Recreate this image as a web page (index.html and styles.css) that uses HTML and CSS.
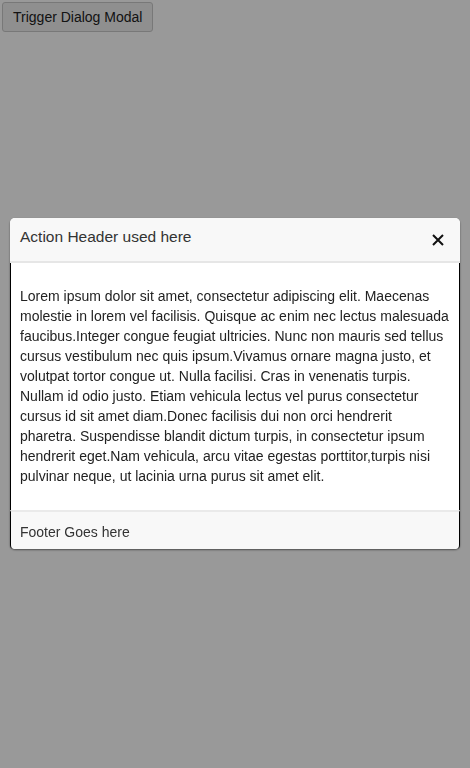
FILE: index.html
```html
<!DOCTYPE html>
<html>
<head>
<meta charset="utf-8">
<link rel="stylesheet" href="styles.css">
</head>
<body>
<button class="trigger">Trigger Dialog Modal</button>
<div class="overlay">
  <div class="dialog">
    <div class="dialog-header">
      <span class="title">Action Header used here</span>
      <span class="close"><svg width="12" height="12" viewBox="0 0 12 12"><path d="M1 1 L11 11 M11 1 L1 11" stroke="#111" stroke-width="2" fill="none"/></svg></span>
    </div>
    <div class="dialog-body">Lorem ipsum dolor sit amet, consectetur adipiscing elit. Maecenas molestie in lorem vel facilisis. Quisque ac enim nec lectus malesuada faucibus.Integer congue feugiat ultricies. Nunc non mauris sed tellus cursus vestibulum nec quis ipsum.Vivamus ornare magna justo, et volutpat tortor congue ut. Nulla facilisi. Cras in venenatis turpis. Nullam id odio justo. Etiam vehicula lectus vel purus consectetur cursus id sit amet diam.Donec facilisis dui non orci hendrerit pharetra. Suspendisse blandit dictum turpis, in consectetur ipsum hendrerit eget.Nam vehicula, arcu vitae egestas porttitor,turpis nisi pulvinar neque, ut lacinia urna purus sit amet elit.</div>
    <div class="dialog-footer">Footer Goes here</div>
  </div>
</div>
</body>
</html>
```
FILE: styles.css
```css
html, body { margin: 0; padding: 0; }
body {
  font-family: "Liberation Sans", Arial, sans-serif;
  background: #fff;
  width: 470px;
  height: 768px;
  position: relative;
}
.trigger {
  margin: 2px 0 0 2px;
  font-family: "Liberation Sans", Arial, sans-serif;
  font-size: 14px;
  color: #222;
  background: #efefef;
  border: 1px solid #c8c8c8;
  border-radius: 3px;
  padding: 6px 10px;
  height: 30px;
}
.overlay {
  position: fixed;
  inset: 0;
  background: rgba(0,0,0,0.4);
  display: flex;
  flex-direction: column;
  padding: 218px 10px 0;
}
.dialog {
  background: #fff;
  border-radius: 5px;
  box-shadow: 0 1px 2px rgba(0,0,0,0.5);
}
.dialog-header {
  background: #f8f8f8;
  border-bottom: 2px solid #e6e6e6;
  border-radius: 5px 5px 0 0;
  height: 43px;
  display: flex;
  justify-content: space-between;
  align-items: flex-start;
  padding: 0 16px 0 10px;
}
.title {
  font-size: 15.5px;
  color: #333;
  line-height: 18px;
  margin-top: 10px;
}
.close {
  margin-top: 16px;
  display: flex;
}
.dialog-body {
  border-left: 1px solid #000;
  border-right: 1px solid #000;
  padding: 23px 9px 24px;
  font-size: 14px;
  line-height: 20px;
  color: #222;
}
.dialog-footer {
  background: #f8f8f8;
  border-top: 2px solid #eaeaea;
  border-left: 1px solid #000;
  border-right: 1px solid #000;
  border-radius: 0 0 4px 4px;
  height: 39px;
  box-sizing: border-box;
  padding: 11px 9px 0;
  font-size: 14px;
  line-height: 18px;
  color: #333;
}
```
